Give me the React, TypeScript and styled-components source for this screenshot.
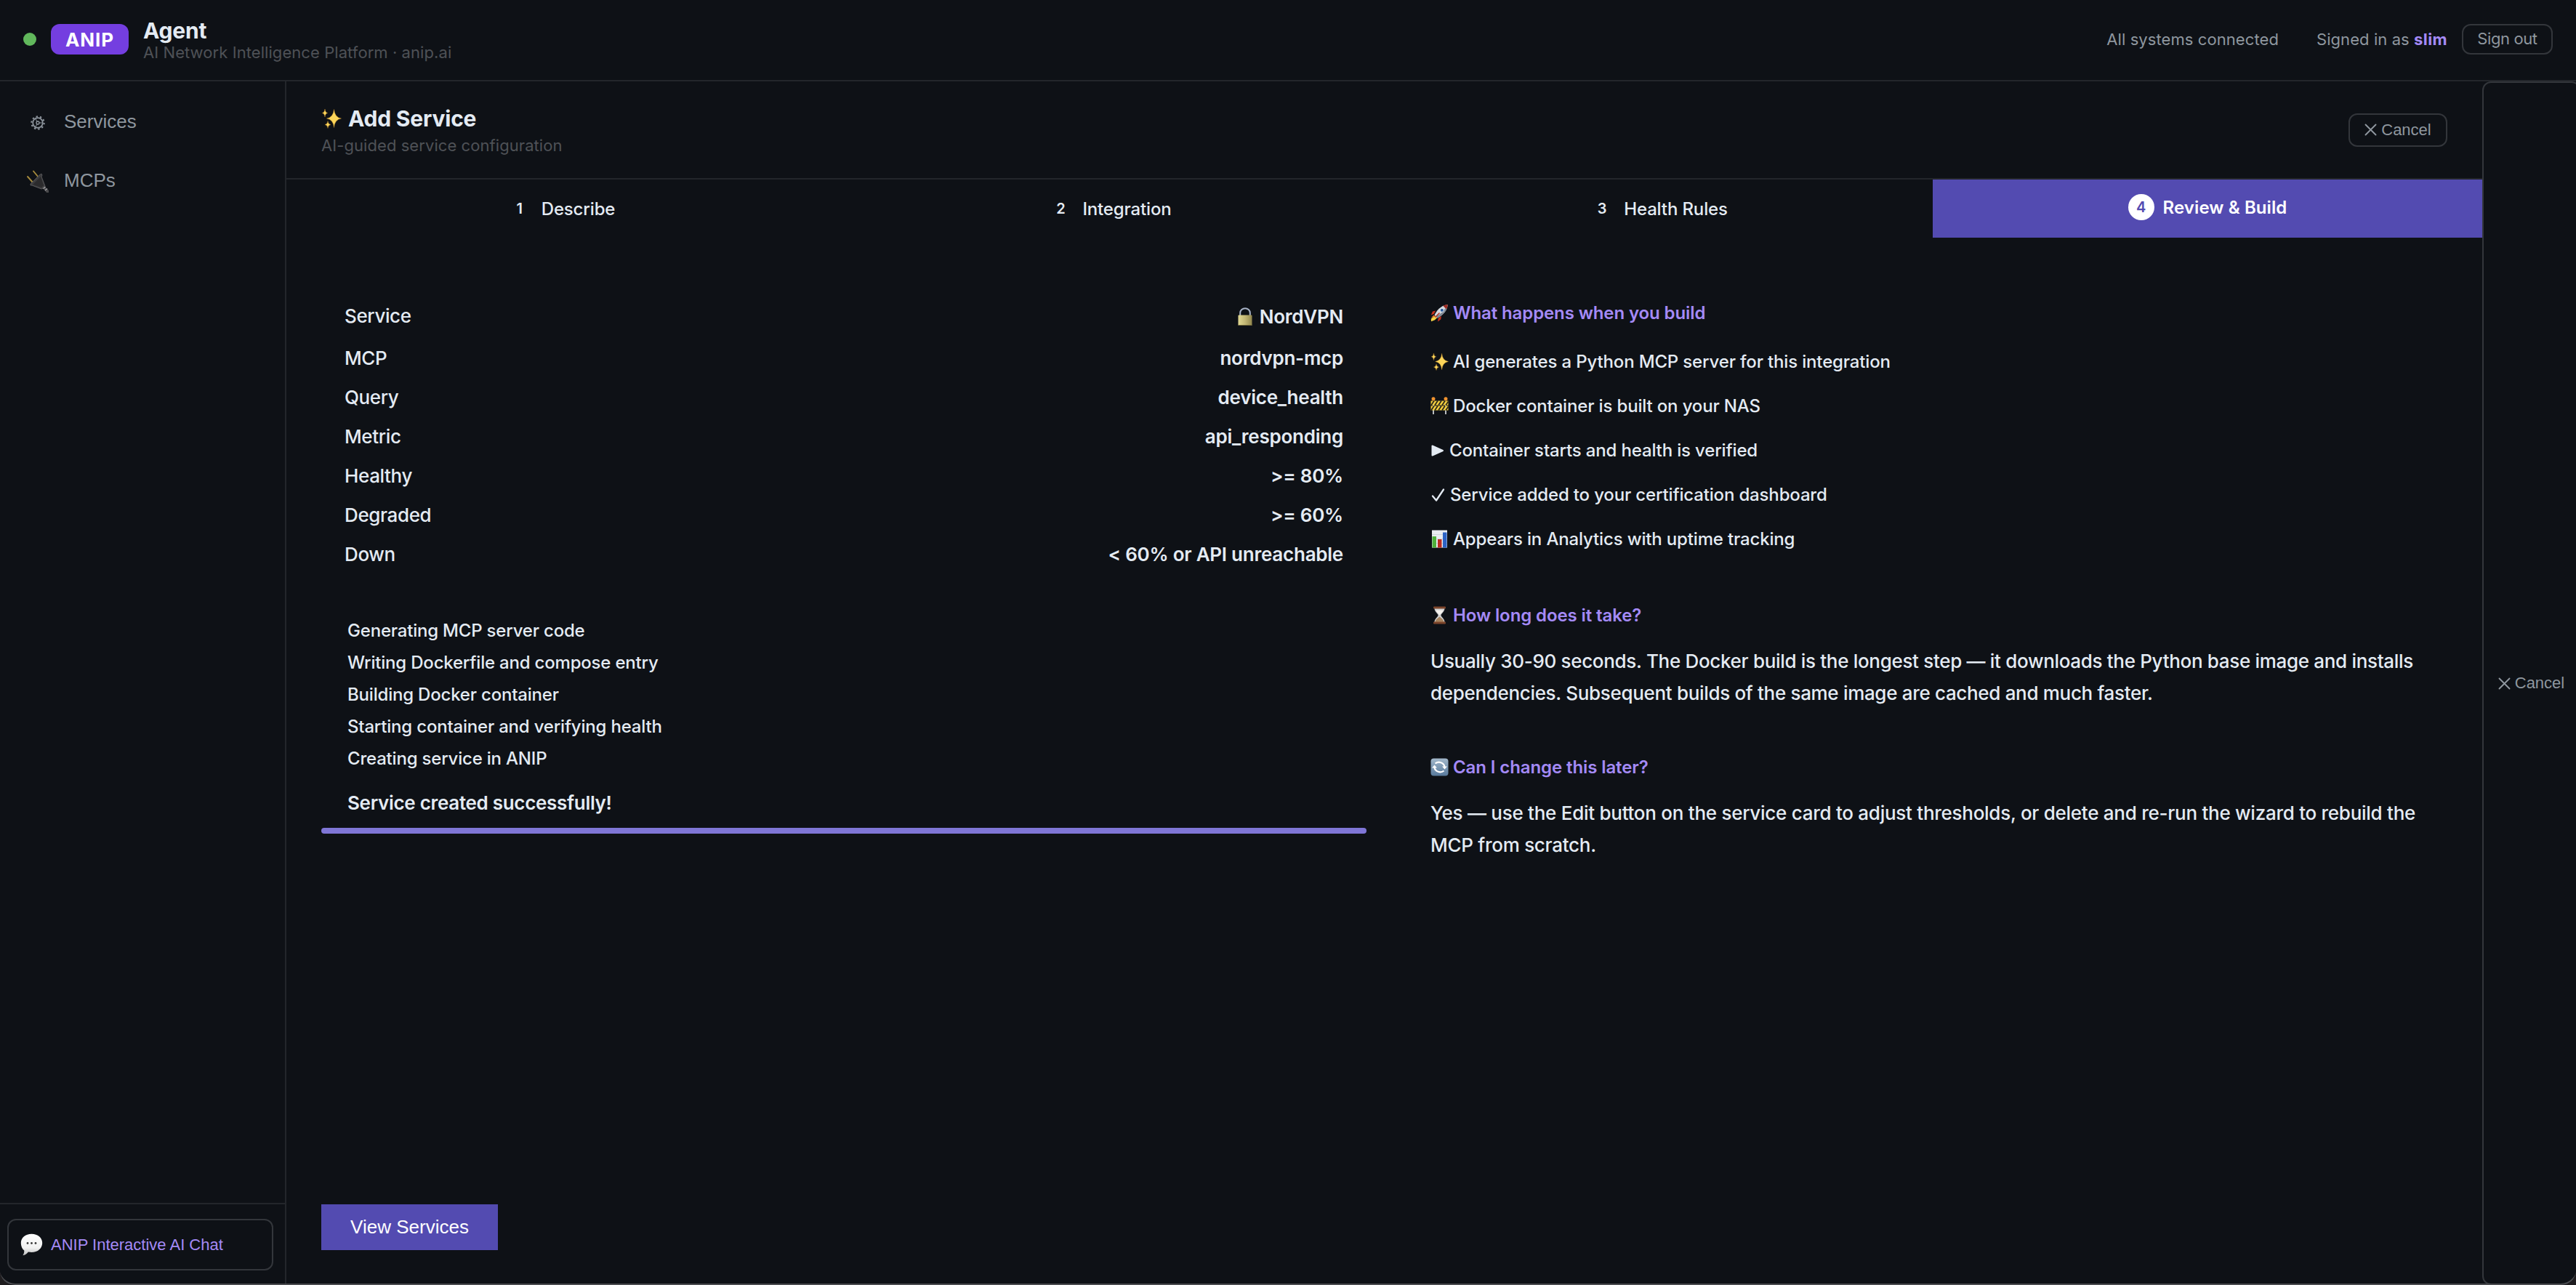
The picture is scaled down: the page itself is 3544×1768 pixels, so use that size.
import React from 'react';
import styled, { createGlobalStyle } from 'styled-components';

const c = {
  bg: '#0e1116',
  line: '#23262b',
  edge: '#33363b',
  text: '#e4ebf3',
  white: '#ffffff',
  muted: '#8f979f',
  faint: '#4e5156',
  lilac: '#a48af6',
  accent: '#534bb1',
  badge: '#743ee0',
  green: '#61b85c',
};
const sans = `Inter, "Noto Sans", sans-serif`;
const arial = `"Liberation Sans", Arial, sans-serif`;

const Global = createGlobalStyle`
  * { box-sizing: border-box; }
  body { margin: 0; background: #1f1d1f; }
  button { font: inherit; color: inherit; background: none; border: 0; padding: 0; margin: 0; }
  svg { display: block; flex: none; }
`;

const Shell = styled.div`
  position: relative;
  width: 3544px;
  height: 1768px;
  overflow: hidden;
  display: flex;
  flex-direction: column;
  background: ${c.bg};
  border-radius: 0 0 20px 20px;
  color: ${c.text};
  font-family: ${sans};
  white-space: nowrap;
`;
const WindowEdge = styled.div`
  position: absolute;
  left: -3px;
  right: -3px;
  bottom: 0;
  height: 44px;
  border: 2px solid #4b4c50;
  border-top: 0;
  border-radius: 0 0 24px 24px;
  pointer-events: none;
`;

/* top bar */
const TopBar = styled.header`
  height: 112px;
  flex: none;
  display: flex;
  align-items: center;
  padding: 0 32px 2px;
  border-bottom: 2px solid ${c.line};
`;
const StatusDot = styled.span`
  width: 18px;
  height: 18px;
  border-radius: 50%;
  background: ${c.green};
`;
const Badge = styled.span`
  width: 107px;
  height: 42px;
  margin: 0 20px;
  display: flex;
  align-items: center;
  justify-content: center;
  border-radius: 12px;
  background: ${c.badge};
  color: ${c.white};
  font-size: 26px;
  font-weight: 700;
  letter-spacing: 0.9px;
`;
const Brand = styled.div`
  flex: 1;
  padding-top: 2px;
`;
const Title = styled.div<{ $h: number }>`
  display: flex;
  align-items: center;
  gap: 9px;
  font-size: 30px;
  line-height: ${p => p.$h}px;
  font-weight: 700;
  letter-spacing: -0.2px;
`;
const Subtitle = styled.div<{ $top?: number }>`
  margin-top: ${p => p.$top || 0}px;
  font-size: 22px;
  line-height: 26px;
  letter-spacing: 0.07px;
  color: ${c.faint};
`;
const TopText = styled.span<{ $gap: number }>`
  margin-right: ${p => p.$gap}px;
  font-size: 22px;
  letter-spacing: 0.08px;
  color: ${c.muted};
  b {
    color: ${c.lilac};
    font-weight: 700;
    letter-spacing: 0.4px;
  }
`;
const SignOut = styled.button`
  width: 125px;
  height: 42px;
  padding-bottom: 3px;
  border: 2px solid ${c.edge};
  border-radius: 12px;
  font-size: 22px;
  letter-spacing: -0.4px;
  color: ${c.muted};
`;

/* body */
const Body = styled.div`
  flex: 1;
  min-height: 0;
  display: flex;
`;
const Sidebar = styled.aside`
  width: 394px;
  flex: none;
  display: flex;
  flex-direction: column;
  border-right: 2px solid ${c.line};
`;
const Nav = styled.nav`
  flex: 1;
  padding: 15px 0 0 34px;
`;
const NavItem = styled.div`
  height: 81px;
  display: flex;
  align-items: center;
  gap: 18px;
  font: 26px ${arial};
  color: ${c.muted};
`;
const NavIcon = styled.span`
  width: 36px;
  padding-top: 2px;
  display: flex;
  justify-content: center;
`;
const SideFoot = styled.div`
  height: 113px;
  padding: 20px 16px 0 10px;
  border-top: 2px solid ${c.line};
`;
const ChatButton = styled.button`
  width: 366px;
  height: 71px;
  display: flex;
  align-items: center;
  gap: 11px;
  padding-left: 16px;
  border: 2px solid ${c.edge};
  border-radius: 12px;
  font: 22px ${arial};
  color: ${c.lilac};
`;

const Main = styled.main`
  width: 3021px;
  flex: none;
  display: flex;
  flex-direction: column;
`;
const WizardHead = styled.div`
  height: 135px;
  flex: none;
  display: flex;
  align-items: center;
  justify-content: space-between;
  padding: 0 48px;
  border-bottom: 2px solid ${c.line};
`;
const CancelButton = styled.button`
  width: 136px;
  height: 46px;
  display: flex;
  align-items: center;
  justify-content: center;
  gap: 6px;
  border: 2px solid ${c.edge};
  border-radius: 12px;
  font: 22px ${arial};
  color: ${c.muted};
`;
const SideCancel = styled(CancelButton)`
  width: 135px;
  height: auto;
  flex: none;
`;
const Steps = styled.div`
  height: 80px;
  flex: none;
  display: grid;
  grid-template-columns: repeat(3, 755px) 1fr;
`;
const Step = styled.div<{ $on?: boolean }>`
  display: flex;
  align-items: center;
  justify-content: center;
  gap: 12px;
  padding-bottom: ${p => (p.$on ? 4 : 0)}px;
  background: ${p => (p.$on ? c.accent : 'transparent')};
  color: ${p => (p.$on ? c.white : c.text)};
  font-size: 24px;
  font-weight: ${p => (p.$on ? 600 : 500)};
  letter-spacing: ${p => (p.$on ? 0.1 : -0.15)}px;
`;
const StepNumber = styled.span<{ $on?: boolean }>`
  width: 36px;
  height: 36px;
  display: flex;
  align-items: center;
  justify-content: center;
  border-radius: 50%;
  background: ${p => (p.$on ? c.white : 'transparent')};
  color: ${p => (p.$on ? c.accent : c.text)};
  font-size: 20px;
  font-weight: 600;
  letter-spacing: 0;
`;

const Content = styled.div`
  flex: 1;
  display: grid;
  grid-template-columns: 1438px 1399px;
  column-gap: 88px;
  padding: 79px 48px 0;
`;
const Summary = styled.dl`
  margin: 0;
  padding: 0 32px;
  font-size: 26px;
`;
const SummaryRow = styled.div<{ $first?: boolean }>`
  height: ${p => (p.$first ? 59 : 54)}px;
  display: flex;
  align-items: center;
  justify-content: space-between;
`;
const Term = styled.dt<{ $first?: boolean }>`
  padding-bottom: ${p => (p.$first ? 2 : 0)}px;
  font-weight: 500;
  letter-spacing: -0.38px;
`;
const Value = styled.dd`
  margin: 0;
  display: flex;
  align-items: center;
  gap: 10px;
  font-weight: 600;
  letter-spacing: -0.24px;
`;
const Log = styled.div`
  padding: 57px 36px 0;
  font-size: 24px;
  font-weight: 500;
  line-height: 44px;
  letter-spacing: -0.2px;
`;
const Success = styled.div`
  margin-top: 17px;
  font-size: 26px;
  font-weight: 600;
  letter-spacing: -0.31px;
`;
const Progress = styled.div`
  height: 8px;
  margin-top: 12px;
  border-radius: 4px;
  background: #7f76d6;
`;

const Help = styled.section`
  padding-top: 2px;
`;
const HelpTitle = styled.h3<{ $top?: number }>`
  height: 44px;
  margin: ${p => p.$top || 0}px 0 0;
  display: flex;
  align-items: center;
  gap: 6px;
  font-size: 24px;
  font-weight: 600;
  letter-spacing: -0.1px;
  color: ${c.lilac};
`;
const HelpList = styled.div`
  padding-top: 15px;
`;
const HelpItem = styled.div`
  height: 61px;
  display: flex;
  align-items: center;
  gap: 6px;
  font-size: 24px;
  font-weight: 500;
  letter-spacing: -0.16px;
`;
const HelpText = styled.p<{ $track: number }>`
  margin: 20px 0 0;
  font-size: 26px;
  font-weight: 500;
  line-height: 44px;
  letter-spacing: ${p => p.$track}px;
  white-space: pre-line;
`;
const Foot = styled.div`
  height: 111px;
  flex: none;
  padding: 0 48px;
`;
const ViewButton = styled.button`
  width: 243px;
  height: 63px;
  padding-bottom: 1px;
  background: ${c.accent};
  color: ${c.white};
  font: 26px ${arial};
`;

/* icons */
const Star = ({ x, y, w, h }: { x: number; y: number; w: number; h: number }) => (
  <path
    d={`M${x} ${y - h} Q${x + w * 0.1} ${y - h * 0.12} ${x + w} ${y} Q${x + w * 0.1} ${y + h * 0.12} ${x} ${y + h} Q${x - w * 0.1} ${y + h * 0.12} ${x - w} ${y} Q${x - w * 0.1} ${y - h * 0.12} ${x} ${y - h}Z`}
    fill="#fbd55a"
    stroke="#c98f2b"
    strokeWidth="0.4"
  />
);
const Sparkles = ({ size }: { size: number }) => (
  <svg width={size} height={size} viewBox="0 0 28 28">
    <Star x={17.5} y={14} w={10} h={12.5} />
    <Star x={5} y={6.5} w={3.8} h={5.5} />
    <Star x={9} y={22.5} w={4} h={5} />
  </svg>
);
const Gear = () => (
  <svg width="20" height="20" viewBox="0 0 20 20" fill="none" stroke={c.muted}>
    <circle cx="10" cy="10" r="8.700" strokeWidth="2" strokeDasharray="2.400 3.067" />
    <circle cx="10" cy="10" r="6.800" strokeWidth="1.700" />
    <circle cx="10" cy="10" r="2" strokeWidth="1.300" />
    <path d="M12 10h4.500M9 8.200L6.800 4.500M9 11.800l-2.200 3.700" strokeWidth="1" />
  </svg>
);
const Plug = () => (
  <svg width="32" height="32" viewBox="0 0 32 32">
    <path d="M2 9l8 9M10 1.500l7 8.500" stroke="#a58a3c" strokeWidth="1.900" strokeLinecap="round" />
    <path d="M6 19L18 7l3-2 1 2-1 2 5 13-2 3-3 1L8 21l-2 0z" fill="#3d3d3f" stroke="#5b5b5d" strokeWidth="0.900" />
    <path d="M9 20L20 9l4 12-3 3z" fill="#2b2b2d" />
    <path d="M22 24l3-2 6 6v3h-3z" fill="#4a4a4c" />
    <path d="M23.500 25.500l3-2.500M26 28l3-2.500" stroke="#a5a5a8" strokeWidth="1.200" />
  </svg>
);
const Bubble = () => (
  <svg width="31" height="31" viewBox="0 0 31 31">
    <defs>
      <linearGradient id="bubble" x1="0" y1="0" x2="0" y2="1">
        <stop offset="0" stopColor="#ffffff" />
        <stop offset="0.65" stopColor="#f1f1f1" />
        <stop offset="1" stopColor="#bdbdbd" />
      </linearGradient>
    </defs>
    <path d="M15.500 .8C24 .8 30.200 6 30.200 13.200S24 26 15.500 26c-1.600 0-3.200-.2-4.600-.5C9 28 6.400 29.800 3.400 30.200c1.400-1.800 2-4 1.900-6.600C2.500 21.300.8 17.500.8 13.200.8 6 7 .8 15.500.8z" fill="url(#bubble)" />
    <g fill="#3c3c3c">
      <circle cx="10" cy="13.500" r="1.400" />
      <circle cx="15.500" cy="13.500" r="1.400" />
      <circle cx="21" cy="13.500" r="1.400" />
    </g>
  </svg>
);
const Lock = () => (
  <svg width="20" height="26" viewBox="0 0 20 26">
    <path d="M3.200 12V7.500a6.800 6.300 0 0 1 13.600 0V12" fill="none" stroke="#a9b4c8" strokeWidth="2" />
    <defs>
      <linearGradient id="lock" x1="0" y1="0" x2="1" y2="0">
        <stop offset="0" stopColor="#e2d993" />
        <stop offset="0.5" stopColor="#c2b775" />
        <stop offset="1" stopColor="#92874d" />
      </linearGradient>
    </defs>
    <rect x="0.500" y="10.500" width="19" height="14.500" rx="1" fill="url(#lock)" />
    <path d="M.5 24.500h19" stroke="#6f6638" />
  </svg>
);
const Cross = () => (
  <svg width="17" height="17" viewBox="0 0 17 17" stroke={c.muted} strokeWidth="1.900" strokeLinecap="round">
    <path d="M1.500 1.500l14 14M15.500 1.500l-14 14" />
  </svg>
);
const Rocket = () => (
  <svg width="25" height="25" viewBox="0 0 25 25">
    <path d="M7 9.500L3 10.500.8 15.500l4-1.500zM15 17l-.8 4.500L10 24.500l.8-5z" fill="#c8321e" />
    <path d="M6 16.500L.8 20.500 1 24.200l5-2 3.500-3.500z" fill="#f6d545" />
    <path d="M4.500 15.500L1 19l5-1 2 2z" fill="#ee7a2c" />
    <path d="M23.800 1C17.500 1.500 10 6 5.500 15.500l4 4C18.500 15 23.500 8 23.800 1z" fill="#d4d9df" />
    <path d="M23.800 1c-2.500.2-4.300.7-6.500 1.800L22 7.500C23 5.500 23.600 3.500 23.800 1z" fill="#9c2b22" />
    <path d="M22 7.500c-2.400 4.800-6.500 9-12.500 12l-2-2C13.500 14.500 18 10.500 20.500 6z" fill="#7f8893" />
    <circle cx="15.800" cy="8.800" r="2.500" fill="#2a5b9c" stroke="#eef1f4" strokeWidth="0.900" />
    <path d="M12.500 12.500L6.500 18.500" stroke="#b32d1d" strokeWidth="1.500" />
  </svg>
);
const Barrier = () => (
  <svg width="25" height="25" viewBox="0 0 25 25">
    <path d="M4 6v18M21 6v18" stroke="#b9bcbf" strokeWidth="2" />
    <rect x="0.500" y="5.500" width="24" height="6" fill="#f3cf3e" />
    <rect x="0.500" y="12.500" width="24" height="6" fill="#f3cf3e" />
    <path
      d="M1 11.500l4-6M6 11.500l4-6M11 11.500l4-6M16 11.500l4-6M21 11.500l3.500-5M1 18.500l4-6M6 18.500l4-6M11 18.500l4-6M16 18.500l4-6M21 18.500l3.500-5"
      stroke="#26241a"
      strokeWidth="1.700"
    />
    <circle cx="4" cy="2.800" r="2.500" fill="#f0932f" />
    <circle cx="21" cy="2.800" r="2.500" fill="#f0932f" />
  </svg>
);
const Play = () => (
  <svg width="20" height="18" viewBox="0 0 20 18">
    <path d="M2.500 2.500v13l14.500-6.500z" fill={c.text} stroke={c.text} strokeWidth="2" strokeLinejoin="round" />
  </svg>
);
const Check = () => (
  <svg width="21" height="20" viewBox="0 0 21 20">
    <path d="M3 11.500l5 6L18 2.500" fill="none" stroke={c.text} strokeWidth="2.300" strokeLinecap="round" strokeLinejoin="round" />
  </svg>
);
const Chart = () => (
  <svg width="25" height="25" viewBox="0 0 25 25">
    <rect x="2" y="0.500" width="21" height="24" fill="#e9edf2" />
    <path d="M2 6.500h21M2 12.500h21M2 18.500h21" stroke="#c6ccd4" strokeWidth="0.700" />
    <rect x="2.500" y="9" width="5.500" height="15.500" fill="#4fb13b" />
    <rect x="10" y="13" width="5.500" height="11.500" fill="#bb2c20" />
    <rect x="17" y="3.500" width="5.500" height="21" fill="#2c62c4" />
  </svg>
);
const Hourglass = () => (
  <svg width="25" height="25" viewBox="0 0 25 25">
    <path d="M5.500 3c0 5 5 7 5 9.500s-5 4.500-5 9.500h14c0-5-5-7-5-9.500s5-4.500 5-9.500z" fill="#cfcfd0" />
    <path d="M6.500 22c0-3.500 4-5.500 6-7.500 2 2 6 4 6 7.500z" fill="#a88560" />
    <path d="M7.500 5.500c1 3.500 4 5 5 7 1-2 4-3.500 5-7z" fill="#f5f2ee" />
    <rect x="4" y="0.500" width="17" height="3" rx="1" fill="#7c452b" />
    <rect x="4" y="21.500" width="17" height="3" rx="1" fill="#7c452b" />
  </svg>
);
const Refresh = () => (
  <svg width="25" height="25" viewBox="0 0 25 25">
    <defs>
      <linearGradient id="refresh" x1="0" y1="0" x2="0" y2="1">
        <stop offset="0" stopColor="#a3b8cb" />
        <stop offset="1" stopColor="#587a9c" />
      </linearGradient>
    </defs>
    <rect x="0.500" y="0.500" width="24" height="24" rx="4" fill="url(#refresh)" />
    <path d="M6.500 7.500a8 7.500 0 0 1 13 4.500M18.500 17.500a8 7.500 0 0 1-13-4.500" fill="none" stroke="#fff" strokeWidth="2.200" />
    <path d="M16 11.500h7l-3.500 4zM2 13.500h7L5.500 9.500z" fill="#fff" />
  </svg>
);

const rows: [string, string][] = [
  ['Service', 'NordVPN'],
  ['MCP', 'nordvpn-mcp'],
  ['Query', 'device_health'],
  ['Metric', 'api_responding'],
  ['Healthy', '>= 80%'],
  ['Degraded', '>= 60%'],
  ['Down', '< 60% or API unreachable'],
];
const log = [
  'Generating MCP server code',
  'Writing Dockerfile and compose entry',
  'Building Docker container',
  'Starting container and verifying health',
  'Creating service in ANIP',
];
const steps = ['Describe', 'Integration', 'Health Rules', 'Review & Build'];

export default function App() {
  return (
    <Shell>
      <Global />
      <TopBar>
        <StatusDot />
        <Badge>ANIP</Badge>
        <Brand>
          <Title $h={34}>Agent</Title>
          <Subtitle>AI Network Intelligence Platform · anip.ai</Subtitle>
        </Brand>
        <TopText $gap={52}>All systems connected</TopText>
        <TopText $gap={20}>
          Signed in as <b>slim</b>
        </TopText>
        <SignOut>Sign out</SignOut>
      </TopBar>
      <Body>
        <Sidebar>
          <Nav>
            <NavItem>
              <NavIcon><Gear /></NavIcon>
              Services
            </NavItem>
            <NavItem>
              <NavIcon><Plug /></NavIcon>
              MCPs
            </NavItem>
          </Nav>
          <SideFoot>
            <ChatButton>
              <Bubble />
              ANIP Interactive AI Chat
            </ChatButton>
          </SideFoot>
        </Sidebar>
        <Main>
          <WizardHead>
            <div>
              <Title $h={36}>
                <Sparkles size={28} />
                Add Service
              </Title>
              <Subtitle $top={6}>AI-guided service configuration</Subtitle>
            </div>
            <CancelButton>
              <Cross />
              Cancel
            </CancelButton>
          </WizardHead>
          <Steps>
            {steps.map((label, i) => (
              <Step key={label} $on={i === 3}>
                <StepNumber $on={i === 3}>{i + 1}</StepNumber>
                {label}
              </Step>
            ))}
          </Steps>
          <Content>
            <section>
              <Summary>
                {rows.map(([term, value], i) => (
                  <SummaryRow key={term} $first={i === 0}>
                    <Term $first={i === 0}>{term}</Term>
                    <Value>
                      {i === 0 && <Lock />}
                      {value}
                    </Value>
                  </SummaryRow>
                ))}
              </Summary>
              <Log>
                {log.map(line => (
                  <div key={line}>{line}</div>
                ))}
                <Success>Service created successfully!</Success>
              </Log>
              <Progress />
            </section>
            <Help>
              <HelpTitle><Rocket />What happens when you build</HelpTitle>
              <HelpList>
                <HelpItem><Sparkles size={25} />AI generates a Python MCP server for this integration</HelpItem>
                <HelpItem><Barrier />Docker container is built on your NAS</HelpItem>
                <HelpItem><Play />Container starts and health is verified</HelpItem>
                <HelpItem><Check />Service added to your certification dashboard</HelpItem>
                <HelpItem><Chart />Appears in Analytics with uptime tracking</HelpItem>
              </HelpList>
              <HelpTitle $top={52}><Hourglass />How long does it take?</HelpTitle>
              <HelpText $track={-0.32}>
                {'Usually 30-90 seconds. The Docker build is the longest step — it downloads the Python base image and installs\ndependencies. Subsequent builds of the same image are cached and much faster.'}
              </HelpText>
              <HelpTitle $top={57}><Refresh />Can I change this later?</HelpTitle>
              <HelpText $track={-0.27}>
                {'Yes — use the Edit button on the service card to adjust thresholds, or delete and re-run the wizard to rebuild the\nMCP from scratch.'}
              </HelpText>
            </Help>
          </Content>
          <Foot>
            <ViewButton>View Services</ViewButton>
          </Foot>
        </Main>
        <SideCancel>
          <Cross />
          Cancel
        </SideCancel>
      </Body>
      <WindowEdge />
    </Shell>
  );
}
